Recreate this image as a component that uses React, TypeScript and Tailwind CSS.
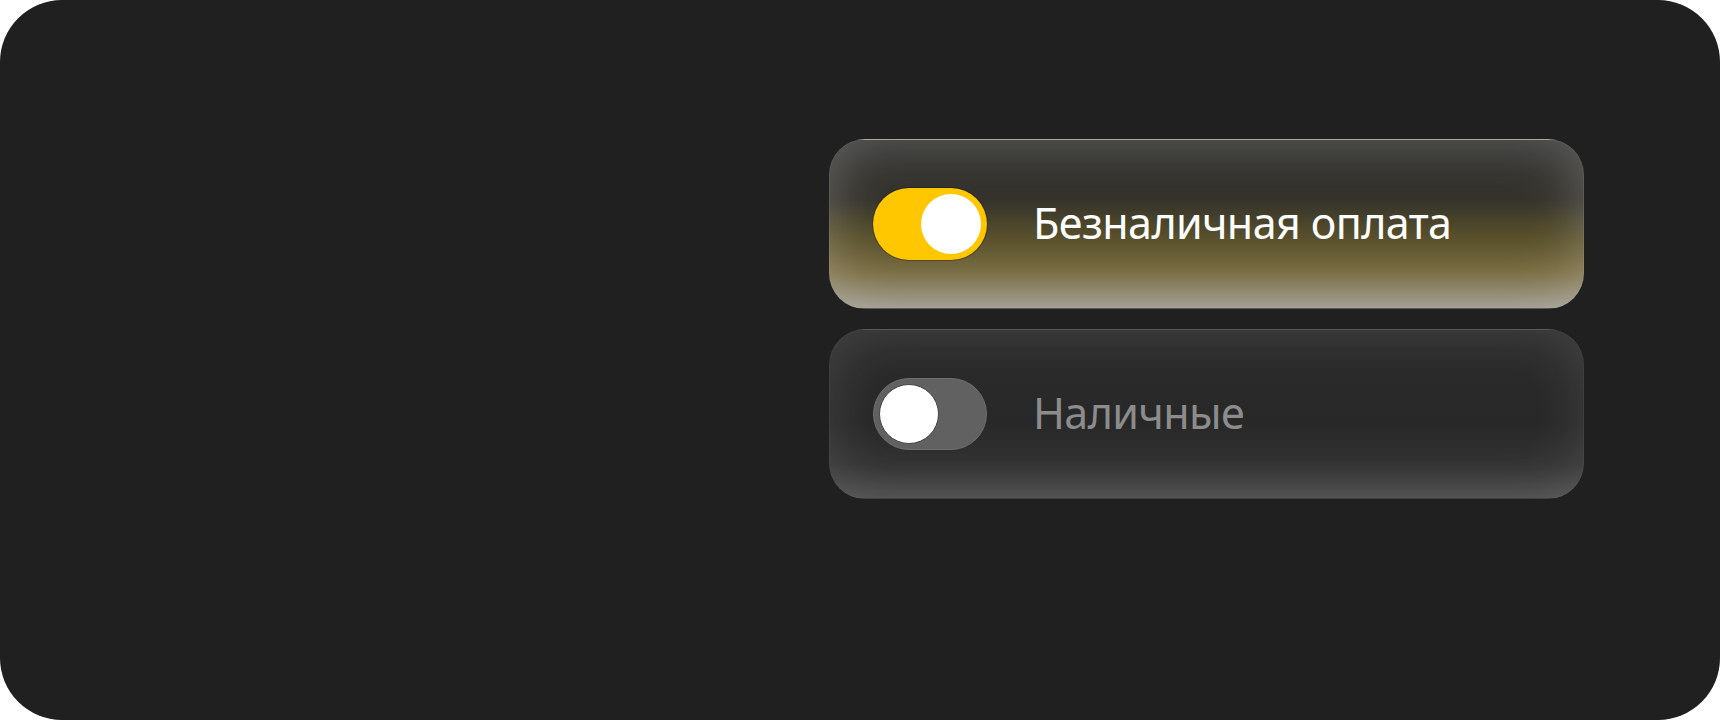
export default function App() {
  return (
    <div className="w-[1720px] h-[720px] bg-white">
      <div className="w-full h-full bg-[#202020] rounded-[62px] flex justify-end pr-[136px] pt-[139px]">
        <div className="flex flex-col gap-[20px] w-[755px]">
          {/* cashless - active */}
          <div className="relative h-[170px] rounded-[36px] border border-white/20 bg-[linear-gradient(180deg,#30302e_0%,#33322c_35%,#58502c_58%,#776b40_78%,#979385_100%)] shadow-[inset_0_0_56px_rgba(255,255,255,0.26)] flex items-center pl-[43px]">
            <div className="w-[114px] h-[72px] rounded-full bg-[#ffc700] flex items-center justify-end pr-[6px] shadow-[0_0_0_1px_rgba(0,0,0,0.25)]">
              <div className="w-[60px] h-[60px] rounded-full bg-white" />
            </div>
            <span className="ml-[46px] -mt-[4px] text-[43px] tracking-[-0.6px] leading-none text-white font-['Noto_Sans',sans-serif]">
              Безналичная оплата
            </span>
          </div>
          {/* cash - inactive */}
          <div className="relative h-[170px] rounded-[36px] border border-white/10 bg-[linear-gradient(180deg,#2b2b2b_0%,#282828_55%,#323232_80%,#484848_100%)] shadow-[inset_0_0_56px_rgba(255,255,255,0.13)] flex items-center pl-[43px]">
            <div className="w-[114px] h-[72px] rounded-full bg-[#616161] border border-[#6e6e6e] flex items-center justify-start pl-[5px]">
              <div className="w-[60px] h-[60px] rounded-full bg-white border border-[#444]" />
            </div>
            <span className="ml-[46px] -mt-[4px] text-[43px] tracking-[-0.6px] leading-none text-[#8c8c8c] font-['Noto_Sans',sans-serif]">
              Наличные
            </span>
          </div>
        </div>
      </div>
    </div>
  )
}
